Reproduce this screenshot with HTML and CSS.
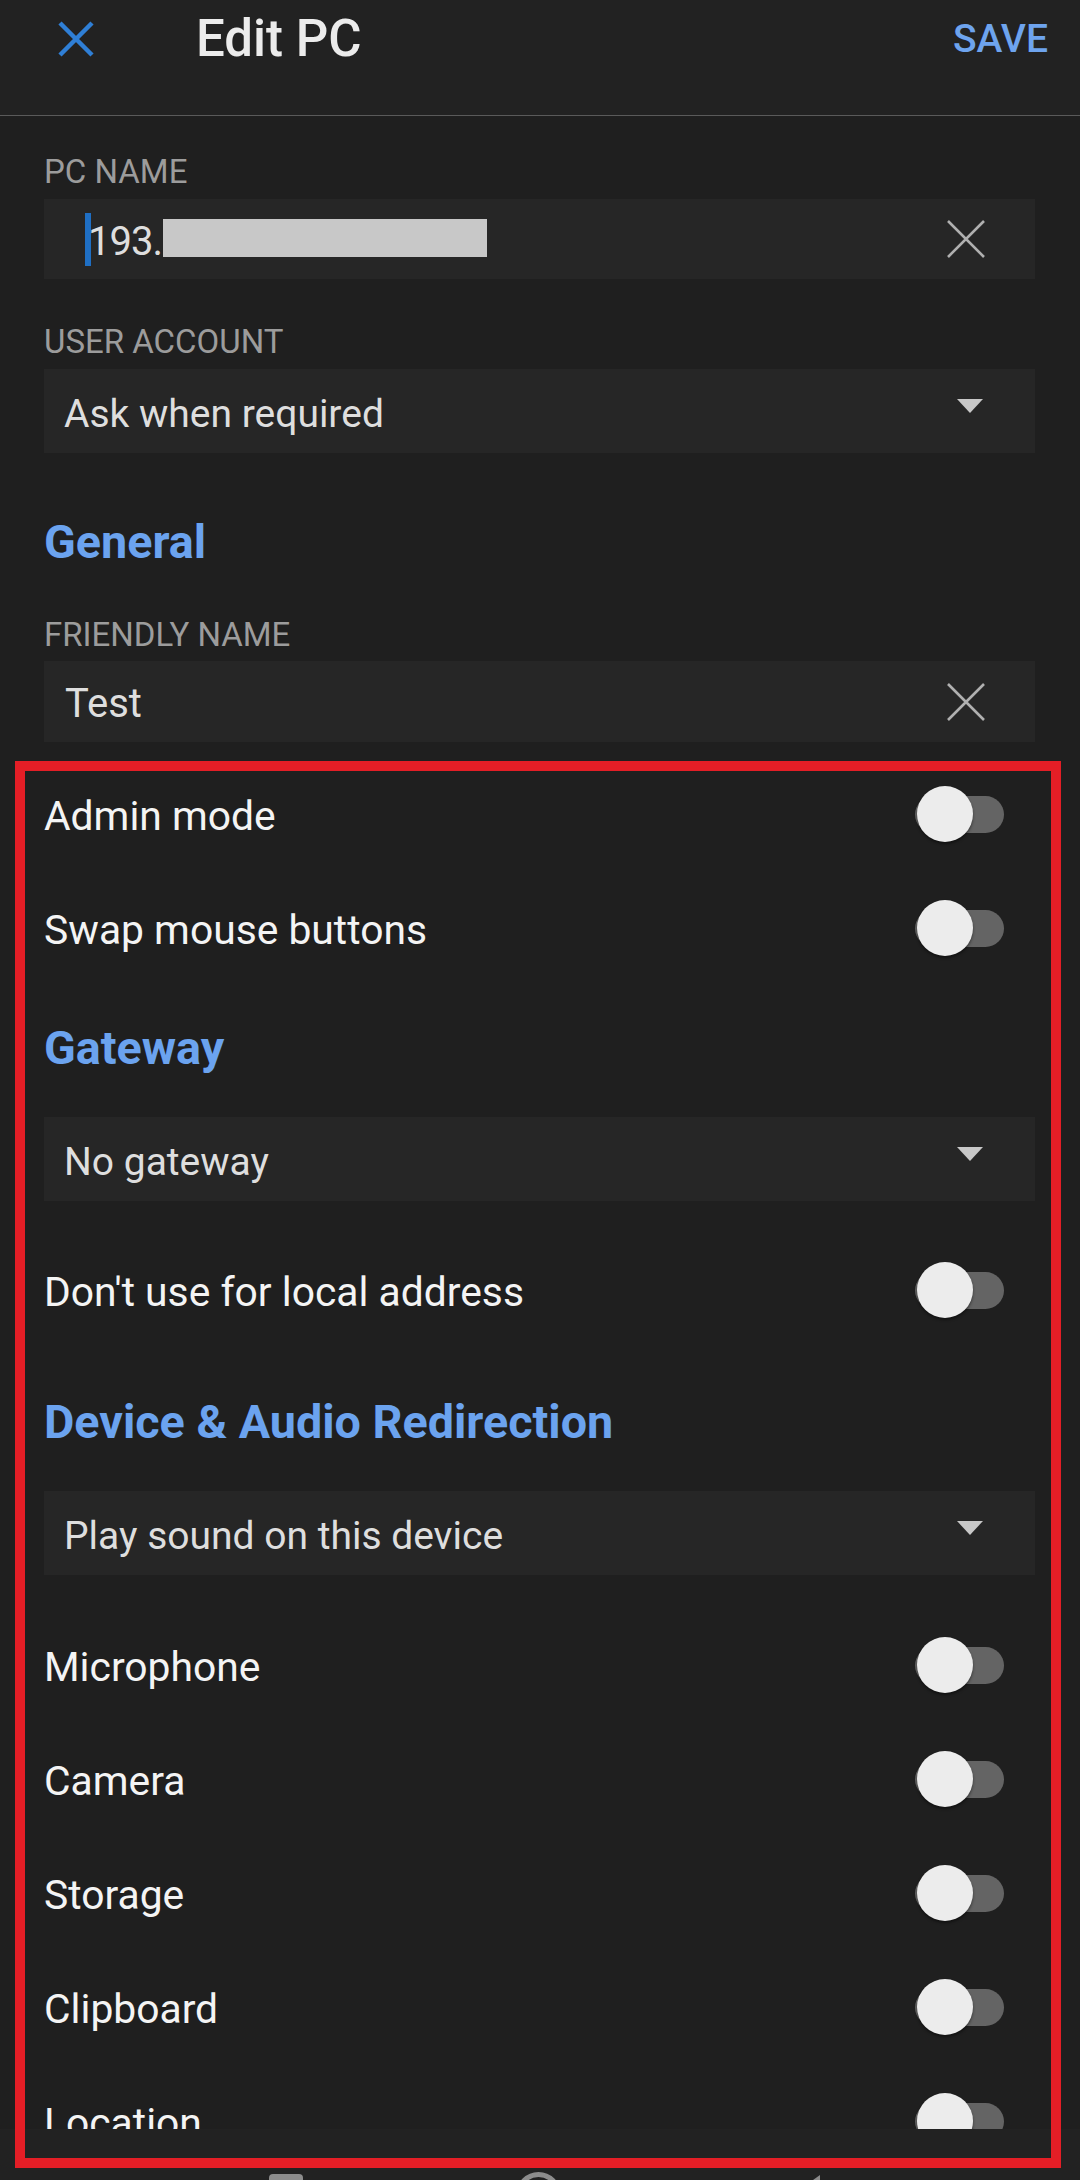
FILE: index.html
```html
<!DOCTYPE html>
<html lang="en">
<head>
    <meta charset="UTF-8">
    <title>Edit PC</title>
    <link rel="stylesheet" href="styles.css">
</head>
<body>
    <div class="screen">
        <header class="topbar">
            <div class="topbar-row">
                <svg class="close-icon" width="38" height="38" viewBox="0 0 38 38">
                    <path d="M3 3 L35 35 M35 3 L3 35" stroke="#2f7fd6" stroke-width="4.5" fill="none"/>
                </svg>
                <h1 class="title">Edit PC</h1>
                <span class="save">SAVE</span>
            </div>
        </header>

        <main class="content">
            <div class="label first">PC NAME</div>
            <div class="field">
                <span class="caret"></span>
                <span class="value value-input">193.</span>
                <span class="redact"></span>
                <svg class="clear-icon" width="40" height="38" viewBox="0 0 40 38">
                    <path d="M2 1 L38 37 M38 1 L2 37" stroke="#b0b0b0" stroke-width="2.6" fill="none"/>
                </svg>
            </div>

            <div class="label">USER ACCOUNT</div>
            <div class="field select">
                <span class="value">Ask when required</span>
                <span class="arrow"></span>
            </div>

            <h2 class="section-title general">General</h2>

            <div class="label">FRIENDLY NAME</div>
            <div class="field field-friendly">
                <span class="value value-input">Test</span>
                <svg class="clear-icon" width="40" height="38" viewBox="0 0 40 38">
                    <path d="M2 1 L38 37 M38 1 L2 37" stroke="#b0b0b0" stroke-width="2.6" fill="none"/>
                </svg>
            </div>

            <div class="toggle-row after-field">
                <span class="toggle-text">Admin mode</span>
                <span class="switch"><span class="knob"></span></span>
            </div>
            <div class="toggle-row">
                <span class="toggle-text">Swap mouse buttons</span>
                <span class="switch"><span class="knob"></span></span>
            </div>

            <h2 class="section-title gateway">Gateway</h2>
            <div class="field select tall">
                <span class="value">No gateway</span>
                <span class="arrow"></span>
            </div>

            <div class="toggle-row after-select">
                <span class="toggle-text">Don't use for local address</span>
                <span class="switch"><span class="knob"></span></span>
            </div>

            <h2 class="section-title">Device &amp; Audio Redirection</h2>
            <div class="field select">
                <span class="value">Play sound on this device</span>
                <span class="arrow"></span>
            </div>

            <div class="toggle-row after-field2">
                <span class="toggle-text">Microphone</span>
                <span class="switch"><span class="knob"></span></span>
            </div>
            <div class="toggle-row">
                <span class="toggle-text">Camera</span>
                <span class="switch"><span class="knob"></span></span>
            </div>
            <div class="toggle-row">
                <span class="toggle-text">Storage</span>
                <span class="switch"><span class="knob"></span></span>
            </div>
            <div class="toggle-row">
                <span class="toggle-text">Clipboard</span>
                <span class="switch"><span class="knob"></span></span>
            </div>
            <div class="toggle-row">
                <span class="toggle-text">Location</span>
                <span class="switch"><span class="knob"></span></span>
            </div>
        </main>

        <nav class="navbar">
            <span class="nav-recent"></span>
            <span class="nav-home"></span>
            <span class="nav-back"></span>
        </nav>

        <!-- marked area -->
        <div class="highlight"></div>
    </div>
</body>
</html>
```

FILE: styles.css
```css
body { margin: 0; background: #1f1f1f; font-family: Roboto, "Noto Sans", sans-serif; color: #f2f2f2; }
.screen { position: relative; width: 1080px; height: 2180px; display: flex; flex-direction: column; overflow: hidden; }

/* top bar */
.topbar { height: 115px; flex-shrink: 0; background: #222222; border-bottom: 1px solid #5a5a5a; }
.topbar-row { height: 78px; display: flex; align-items: center; padding: 0 32px 0 57px; }
.close-icon { flex-shrink: 0; }
.title { margin: 0 0 0 101px; font-size: 51px; font-weight: 500; line-height: 78px; color: #ececec; }
.save { margin-left: auto; font-size: 39px; font-weight: 500; line-height: 78px; color: #6ea4ee; }

/* content */
.content { flex: 1; overflow: hidden; padding: 0 45px 0 44px; }
.label { margin-top: 43px; font-size: 33px; line-height: 40px; color: #9c9c9c; }
.label.first { margin-top: 36px; }
.field { margin-top: 7px; height: 80px; box-sizing: border-box; padding: 4px 49px 0 20px; background: #262626; display: flex; align-items: center; }
.field-friendly { margin-top: 6px; height: 81px; }
.value { font-size: 39px; color: #dedede; }
.value-input { font-size: 40px; padding-left: 1px; }
.caret { width: 6px; height: 53px; background: #1f6fc4; margin: -4px 0 0 21px; }
.field .caret + .value { padding-left: 0; margin-left: -3px; letter-spacing: -1px; }
.redact { width: 324px; height: 38px; background: #c8c8c8; margin: -6px 0 0 1px; }
.clear-icon { margin-left: auto; margin-top: -4px; }

.select { height: 84px; padding-top: 5px; padding-right: 52px; }
.select.tall { margin-top: 39px; }
.arrow { margin-left: auto; margin-top: -15px; width: 0; height: 0; border-left: 13px solid transparent; border-right: 13px solid transparent; border-top: 14px solid #c8c8c8; }

.section-title { margin: 45px 0 0; font-size: 46.7px; font-weight: 700; line-height: 60px; color: #6ba3ef; }
.section-title.general { margin-top: 59px; }
.section-title.gateway { margin-top: 33px; }
.section-title + .field { margin-top: 39px; }

/* switch rows */
.toggle-row { height: 114px; display: flex; align-items: center; padding-right: 31px; }
.toggle-row.after-field { margin-top: 15px; }
.toggle-row.after-select { margin-top: 32px; }
.toggle-row.after-field2 { margin-top: 33px; }
.toggle-text { font-size: 40.8px; color: #f4f4f4; padding-top: 4px; }
.switch { position: relative; margin-left: auto; width: 89px; height: 56px; }
.switch::before { content: ""; position: absolute; left: 0; right: 0; top: 10px; height: 37px; border-radius: 19px; background: #646464; }
.knob { position: absolute; left: 2px; top: 0; width: 56px; height: 56px; border-radius: 50%; background: #ececec; box-shadow: 0 2px 3px rgba(0,0,0,0.45); }

/* system nav */
.navbar { height: 51px; flex-shrink: 0; background: #222222; display: flex; overflow: hidden; }
.nav-recent { margin: 45px 0 0 269px; width: 34px; height: 34px; border-radius: 4px; background: #8c8c8c; }
.nav-home { margin: 43px 0 0 213px; width: 35px; height: 35px; border: 5px solid #8c8c8c; border-radius: 50%; }
.nav-back { margin: 46px 0 0 231px; width: 0; height: 0; border-top: 20px solid transparent; border-bottom: 20px solid transparent; border-right: 28px solid #8c8c8c; }

/* red annotation frame */
.highlight { position: absolute; left: 15px; top: 761px; width: 1046px; height: 1407px; box-sizing: border-box; border: 10px solid #e41e26; pointer-events: none; }
```
